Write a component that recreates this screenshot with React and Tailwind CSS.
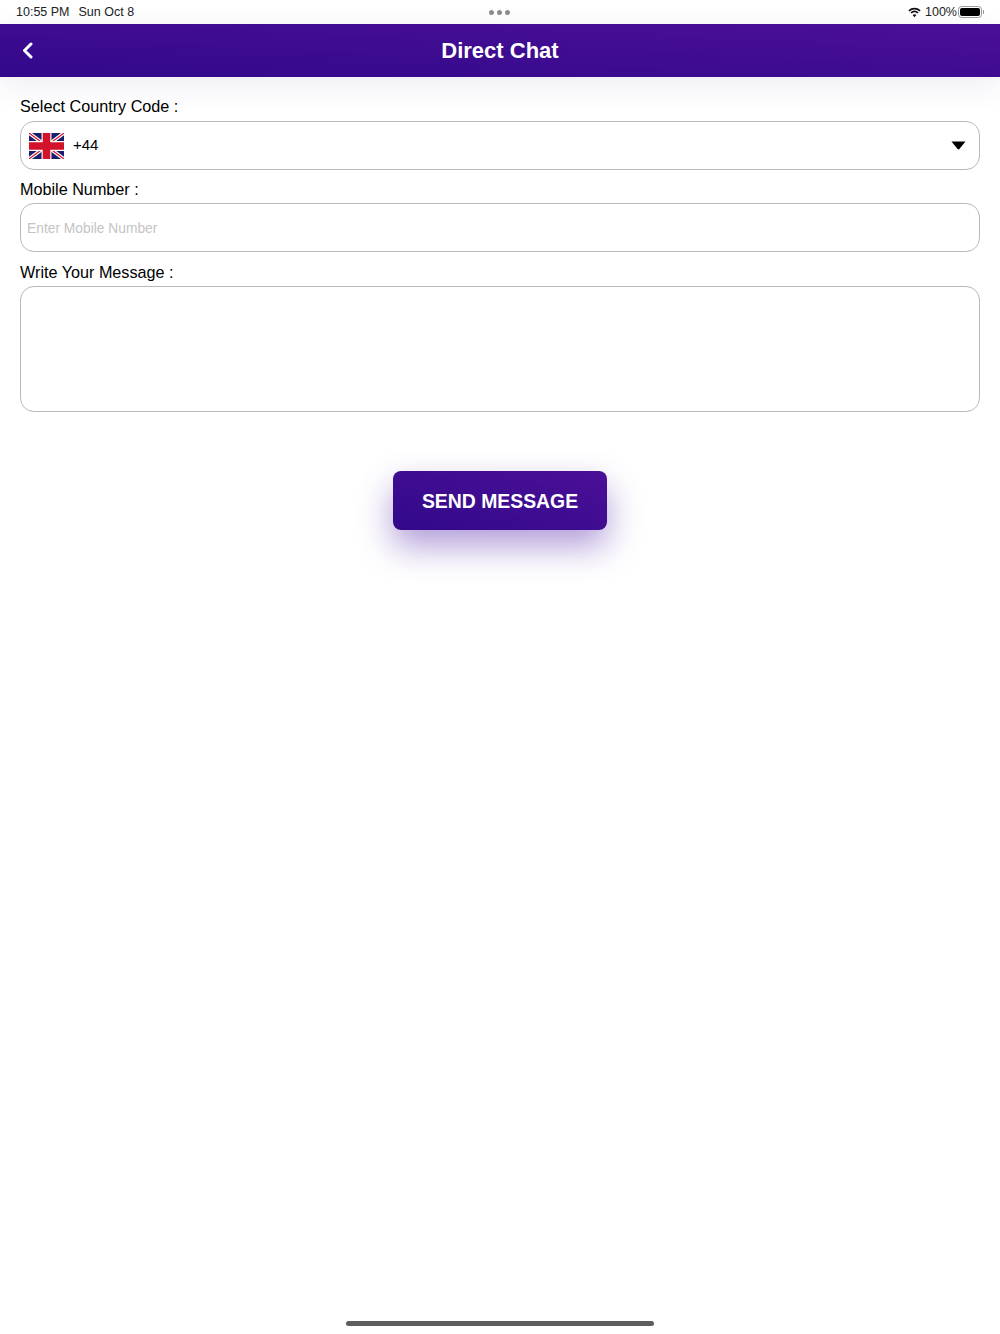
function UkFlag() {
  return (
    <svg width="35" height="26" viewBox="0 0 60 44" preserveAspectRatio="none" className="shrink-0">
      <rect width="60" height="44" fill="#1b1f6b" />
      <path d="M0 0L60 44M60 0L0 44" stroke="#fff" strokeWidth="6" />
      <path d="M0 0L60 44M60 0L0 44" stroke="#d3132b" strokeWidth="2" />
      <path d="M30 0V44M0 22H60" stroke="#fff" strokeWidth="17" />
      <path d="M30 0V44M0 22H60" stroke="#d3132b" strokeWidth="13" />
    </svg>
  );
}

function StatusBar() {
  return (
    <div className="grid h-6 grid-cols-3 items-center bg-white px-4 text-[12.5px] leading-none text-[#222222]">
      <div className="flex gap-[9px]">
        <span>10:55 PM</span>
        <span>Sun Oct 8</span>
      </div>
      <div className="flex justify-center gap-[3px]">
        <span className="h-[5px] w-[5px] rounded-full bg-[#8c8c8c]" />
        <span className="h-[5px] w-[5px] rounded-full bg-[#8c8c8c]" />
        <span className="h-[5px] w-[5px] rounded-full bg-[#8c8c8c]" />
      </div>
      <div className="flex items-center justify-end">
        <svg width="13" height="11" viewBox="0 0 14 11" fill="none" stroke="#111111" strokeWidth="1.8">
          <path d="M1 3.8C4.4 .6 9.6 .6 13 3.8" />
          <path d="M3.2 6C5.4 4 8.6 4 10.8 6" />
          <path d="M7 10.6L5 8.2C6.2 7.2 7.8 7.2 9 8.2Z" fill="#111111" stroke="none" />
        </svg>
        <span className="ml-[4px] mr-[1px]">100%</span>
        <div className="flex items-center gap-[1px]">
          <div className="flex h-[12px] w-[24px] rounded-[3.5px] border border-[#9a9a9a] p-[1px]">
            <div className="flex-1 rounded-[2px] bg-black" />
          </div>
          <div className="h-[4px] w-[1px] bg-[#9a9a9a]" />
        </div>
      </div>
    </div>
  );
}

function Header() {
  return (
    <header className="relative flex h-[53px] items-center justify-center bg-linear-to-tr from-[#32088b] to-[#4b0f97] shadow-[0_8px_30px_rgba(60,40,120,0.09)]">
      <svg
        className="absolute left-[22px] top-[18px]"
        width="11"
        height="17"
        viewBox="0 0 11 17"
        fill="none"
        stroke="#ffffff"
        strokeWidth="3"
        strokeLinecap="round"
        strokeLinejoin="round"
      >
        <path d="M9 2L2.5 8.5L9 15" />
      </svg>
      <h1 className="text-[22px] font-bold leading-none text-white">Direct Chat</h1>
    </header>
  );
}

function Label({ children }) {
  return <label className="mb-[2px] block h-6 text-[16.2px] leading-6 text-black">{children}</label>;
}

export default function App() {
  return (
    <div className="flex h-[1334px] flex-col bg-white font-['Liberation_Sans',Arial,sans-serif]">
      <StatusBar />
      <Header />

      <main className="flex flex-1 flex-col px-5 pt-[17px]">
        <div className="pb-[1px]">
          <Label>Select Country Code :</Label>
        </div>
        <div className="flex h-[49px] items-center rounded-[14px] border border-[#b8b8b8] pl-2 pr-[13px]">
          <UkFlag />
          <span className="ml-[9px] text-[15px] text-black">+44</span>
          <svg className="ml-auto" width="15" height="9" viewBox="0 0 15 9">
            <path d="M0.5 0.5H14.5L8.6 7.8Q7.5 9 6.4 7.8Z" fill="#000000" />
          </svg>
        </div>

        <div className="mt-[7px]">
          <Label>Mobile Number :</Label>
          <input
            type="text"
            placeholder="Enter Mobile Number"
            className="block h-[49px] w-full rounded-[14px] border border-[#b8b8b8] px-[6px] pt-[2px] text-[13.8px] outline-none placeholder:text-[#c4c4c4]"
          />
        </div>

        <div className="mt-2">
          <Label>Write Your Message :</Label>
          <textarea className="block h-[126px] w-full resize-none rounded-[14px] border border-[#b8b8b8] px-[6px] py-2 text-[14px] outline-none" />
        </div>

        <button
          type="button"
          className="mx-auto mt-[59px] h-[59px] w-[214px] rounded-[8px] bg-linear-to-tr from-[#32088b] to-[#4b0f97] pt-[2px] text-[19.4px] font-bold text-white shadow-[0_16px_34px_rgba(70,20,160,0.42)]"
        >
          SEND MESSAGE
        </button>

        <div className="mx-auto mb-2 mt-auto h-[5px] w-[308px] rounded-full bg-[#5e5e5e]" />
      </main>
    </div>
  );
}
